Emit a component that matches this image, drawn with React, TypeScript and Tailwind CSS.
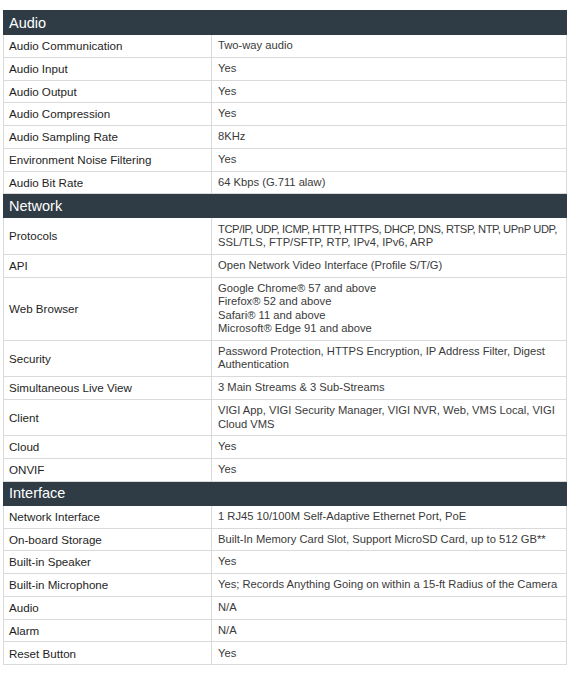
type Row = [string, string[]];
type Section = { title: string; rows: Row[] };

const specs: Section[] = [
  {
    title: "Audio",
    rows: [
      ["Audio Communication", ["Two-way audio"]],
      ["Audio Input", ["Yes"]],
      ["Audio Output", ["Yes"]],
      ["Audio Compression", ["Yes"]],
      ["Audio Sampling Rate", ["8KHz"]],
      ["Environment Noise Filtering", ["Yes"]],
      ["Audio Bit Rate", ["64 Kbps (G.711 alaw)"]],
    ],
  },
  {
    title: "Network",
    rows: [
      ["Protocols", ["TCP/IP, UDP, ICMP, HTTP, HTTPS, DHCP, DNS, RTSP, NTP, UPnP UDP,", "SSL/TLS, FTP/SFTP, RTP, IPv4, IPv6, ARP"]],
      ["API", ["Open Network Video Interface (Profile S/T/G)"]],
      [
        "Web Browser",
        ["Google Chrome® 57 and above", "Firefox® 52 and above", "Safari® 11 and above", "Microsoft® Edge 91 and above"],
      ],
      ["Security", ["Password Protection, HTTPS Encryption, IP Address Filter, Digest", "Authentication"]],
      ["Simultaneous Live View", ["3 Main Streams & 3 Sub-Streams"]],
      ["Client", ["VIGI App, VIGI Security Manager, VIGI NVR, Web, VMS Local, VIGI", "Cloud VMS"]],
      ["Cloud", ["Yes"]],
      ["ONVIF", ["Yes"]],
    ],
  },
  {
    title: "Interface",
    rows: [
      ["Network Interface", ["1 RJ45 10/100M Self-Adaptive Ethernet Port, PoE"]],
      ["On-board Storage", ["Built-In Memory Card Slot, Support MicroSD Card, up to 512 GB**"]],
      ["Built-in Speaker", ["Yes"]],
      ["Built-in Microphone", ["Yes; Records Anything Going on within a 15-ft Radius of the Camera"]],
      ["Audio", ["N/A"]],
      ["Alarm", ["N/A"]],
      ["Reset Button", ["Yes"]],
    ],
  },
];

// the first protocols line is long, squeeze it a bit so it stays on one row
const tight = "TCP/IP, UDP, ICMP, HTTP, HTTPS, DHCP, DNS, RTSP, NTP, UPnP UDP,";

export default function App() {
  return (
    <div className="w-[570px] h-[674px] bg-white pt-[10px] px-[3px] font-['Liberation_Sans',Arial,sans-serif]">
      <table className="w-[564px] border-collapse table-fixed">
        <colgroup>
          <col className="w-[208px]" />
          <col />
        </colgroup>
        <tbody>
          {specs.map((section) => (
            <>
              <tr key={section.title} className="bg-[#2f3b45]">
                <td colSpan={2} className="h-[24px] px-[5px] text-[14.5px] leading-[16px] text-white border border-[#2f3b45]">
                  {section.title}
                </td>
              </tr>
              {section.rows.map(([label, value]) => (
                <tr key={section.title + label}>
                  <td className="border border-[#dadada] px-[5px] py-[4.15px] text-[11.6px] leading-[13.5px] text-[#1e1e1e] align-middle">
                    {label}
                  </td>
                  <td className="border border-[#dadada] pl-[6px] pr-[2px] py-[4.15px] text-[11.2px] leading-[13.5px] text-[#3a3a3a] align-middle">
                    {value.map((line) => (
                      <div key={line} className={line === tight ? "whitespace-nowrap tracking-[-0.4px]" : "whitespace-nowrap"}>
                        {line}
                      </div>
                    ))}
                  </td>
                </tr>
              ))}
            </>
          ))}
        </tbody>
      </table>
    </div>
  );
}
